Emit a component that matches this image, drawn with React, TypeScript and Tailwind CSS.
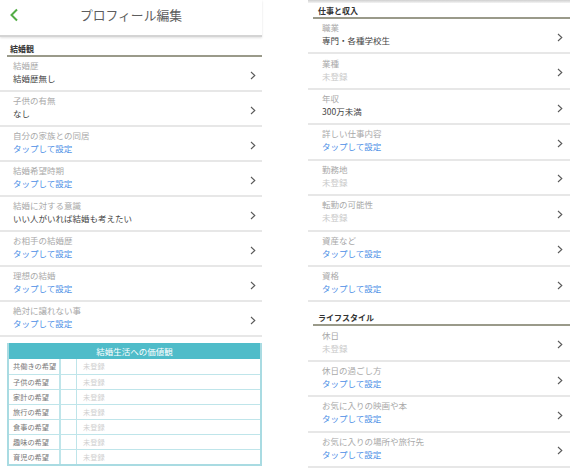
import React from "react";

const FONT = { fontFamily: '"Noto Sans CJK JP", "Noto Sans", sans-serif' };

type Kind = "val" | "tap" | "none";
type Row = { label: string; value: string; kind: Kind };

const Chevron = () => (
  <svg width="6" height="9" viewBox="0 0 6 9" className="shrink-0">
    <polyline points="1,1 4.8,4.5 1,8" fill="none" stroke="#5a5a5a" strokeWidth="1.1" />
  </svg>
);

function ListRow({ r, h, pl, pr }: { r: Row; h: string; pl: string; pr: string }) {
  const vc =
    r.kind === "val" ? "text-[#444]" : r.kind === "tap" ? "text-[#4b8ee6]" : "text-[#c9c9c9]";
  return (
    <div className={`flex items-center border-b-2 border-[#e7e7e7] ${h} ${pl} ${pr}`}>
      <div className="flex-1 flex flex-col pb-[3px]">
        <div className="text-[8.5px] leading-[13px] text-[#a9a9a9]">{r.label}</div>
        <div className={`text-[8.5px] leading-[13px] ${vc}`}>{r.value}</div>
      </div>
      <div className="mt-[3px]">
        <Chevron />
      </div>
    </div>
  );
}

const TAP = "タップして設定";
const NONE = "未登録";

const leftRows: Row[] = [
  { label: "結婚歴", value: "結婚歴無し", kind: "val" },
  { label: "子供の有無", value: "なし", kind: "val" },
  { label: "自分の家族との同居", value: TAP, kind: "tap" },
  { label: "結婚希望時期", value: TAP, kind: "tap" },
  { label: "結婚に対する意識", value: "いい人がいれば結婚も考えたい", kind: "val" },
  { label: "お相手の結婚歴", value: TAP, kind: "tap" },
  { label: "理想の結婚", value: TAP, kind: "tap" },
  { label: "絶対に譲れない事", value: TAP, kind: "tap" },
];

const workRows: Row[] = [
  { label: "職業", value: "専門・各種学校生", kind: "val" },
  { label: "業種", value: NONE, kind: "none" },
  { label: "年収", value: "300万未満", kind: "val" },
  { label: "詳しい仕事内容", value: TAP, kind: "tap" },
  { label: "勤務地", value: NONE, kind: "none" },
  { label: "転勤の可能性", value: NONE, kind: "none" },
  { label: "資産など", value: TAP, kind: "tap" },
  { label: "資格", value: TAP, kind: "tap" },
];

const lifeRows: Row[] = [
  { label: "休日", value: NONE, kind: "none" },
  { label: "休日の過ごし方", value: TAP, kind: "tap" },
  { label: "お気に入りの映画や本", value: TAP, kind: "tap" },
  { label: "お気に入りの場所や旅行先", value: TAP, kind: "tap" },
];

const tableRows = ["共働きの希望", "子供の希望", "家計の希望", "旅行の希望", "食事の希望", "趣味の希望", "育児の希望"];

export default function App() {
  return (
    <div className="w-[570px] h-[468px] overflow-hidden bg-white flex" style={FONT}>
      {/* Left panel */}
      <div className="w-[262px] shrink-0 flex flex-col">
        <div className="relative h-[37px] flex items-center justify-center border-b-2 border-[#d4d4d4] shadow-[0_1px_2px_rgba(0,0,0,0.12)]">
          <svg width="10" height="14" viewBox="0 0 10 14" className="absolute left-[9px] top-[8px]">
            <polyline points="8,1.5 2.5,7 8,12.5" fill="none" stroke="#53ad45" strokeWidth="2" />
          </svg>
          <span className="text-[12.8px] text-[#5d5d5d] mb-[6px]">プロフィール編集</span>
        </div>
        <div className="ml-[7px] mt-[6px] border-b-2 border-[#9a9a8a]">
          <div className="pl-[3px] text-[8px] leading-[12px] font-bold text-[#333]">結婚観</div>
        </div>
        {leftRows.map((r) => (
          <ListRow key={r.label} r={r} h="h-[35px]" pl="pl-[13px]" pr="pr-[6px]" />
        ))}
        <div className="ml-[7px] mt-[6px] border-2 border-[#a9dbe2] border-t-0">
          <div className="h-[16px] bg-[#4fbcc9] flex items-center justify-center text-white text-[8.5px] leading-[16px]">
            結婚生活への価値観
          </div>
          {tableRows.map((t, i) => (
            <div
              key={t}
              className={`flex h-[15px] ${i > 0 ? "border-t border-[#bfe5ea]" : ""}`}
            >
              <div className="w-[52px] pl-[4px] border-r-2 border-[#bfe5ea] text-[7.2px] leading-[14px] text-[#777]">{t}</div>
              <div className="w-[16px] border-r border-[#bfe5ea]" />
              <div className="flex-1 pl-[6px] text-[7.2px] leading-[14px] text-[#cfcfcf]">未登録</div>
            </div>
          ))}
        </div>
      </div>

      <div className="w-[46px] shrink-0" />

      {/* Right panel */}
      <div className="flex-1 flex flex-col">
        <div className="h-[3px] bg-gradient-to-b from-[#cfcfcf] to-[#f4f4f4]" />
        <div className="ml-[5px] mt-[2px] border-b-2 border-[#9a9a8a]">
          <div className="pl-[5px] text-[8px] leading-[12px] font-bold text-[#333]">仕事と収入</div>
        </div>
        {workRows.map((r) => (
          <ListRow key={r.label} r={r} h="h-[35.5px]" pl="pl-[14px]" pr="pr-[7px]" />
        ))}
        <div className="ml-[5px] mt-[10px] border-b-2 border-[#9a9a8a]">
          <div className="pl-[5px] text-[8px] leading-[12px] font-bold text-[#333]">ライフスタイル</div>
        </div>
        {lifeRows.map((r) => (
          <ListRow key={r.label} r={r} h="h-[35.5px]" pl="pl-[14px]" pr="pr-[7px]" />
        ))}
      </div>
    </div>
  );
}
